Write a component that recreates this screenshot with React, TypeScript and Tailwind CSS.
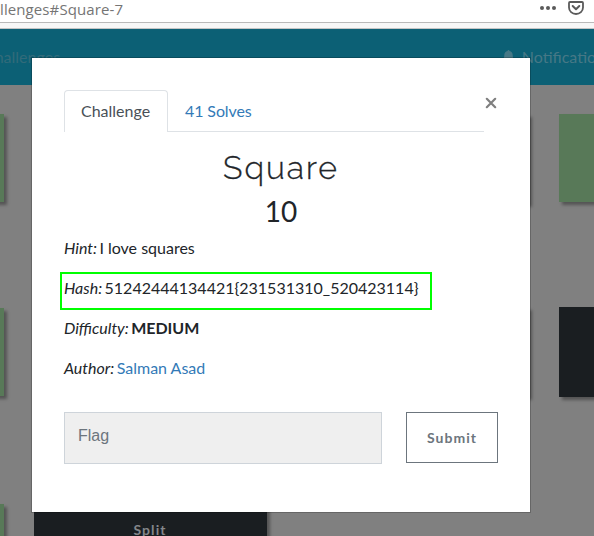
import React from "react";

const cards = [
  { solved: true }, { solved: true }, { solved: false }, { solved: true },
  { solved: true }, { solved: false }, { solved: false }, { solved: false },
  { solved: true }, { solved: false, name: "Split" },
];

function BrowserBar() {
  return (
    <div className="h-[29px] bg-white">
      <div className="flex h-[23px] items-start border-b border-[#b9b9b9]">
        <span className="whitespace-nowrap pt-px font-['Open_Sans',sans-serif] text-[15px] leading-4 tracking-[0.100px] text-[#757575]">
          llenges#Square-7
        </span>
        <svg className="mt-[5px] ml-auto" width="16" height="6" viewBox="0 0 16 6" fill="#5a5a5a">
          <circle cx="2" cy="3" r="2" />
          <circle cx="8" cy="3" r="2" />
          <circle cx="14" cy="3" r="2" />
        </svg>
        <svg className="mt-px mr-[10px] ml-3" width="16" height="14" viewBox="0 0 16 14" fill="none" stroke="#5a5a5a">
          <path d="M2 1h12a1 1 0 0 1 1 1v4.500a7 6.500 0 0 1-14 0V2a1 1 0 0 1 1-1z" strokeWidth="1.800" />
          <path d="M4.700 5L8 8.200 11.300 5" strokeWidth="2" strokeLinecap="round" strokeLinejoin="round" />
        </svg>
      </div>
      <div className="h-[6px] border-b border-[#c4c4c4] bg-[#f7f7f7]" />
    </div>
  );
}

function Label({ children }: { children: React.ReactNode }) {
  return <em className="-mr-[1.700px]">{children}</em>;
}

function ChallengeModal() {
  return (
    <div className="absolute top-[57px] left-[31px] h-[456px] w-[500px] border border-black/20 bg-white bg-clip-padding px-8 pt-8 text-[#212529]">
      <div className="flex">
        <div className="flex h-[42px] w-[420px] border-b border-[#dee2e6] text-base leading-6">
          <div className="h-[42px] w-[104px] rounded-t border border-b-0 border-[#dee2e6] bg-white px-4 pt-2 text-[#495057]">
            Challenge
          </div>
          <div className="px-[17px] pt-[9px] tracking-[-0.100px] text-[#337ab7]">41 Solves</div>
        </div>
        <svg className="mt-[7px] ml-px" width="12" height="12" viewBox="0 0 12 12" stroke="#7f7f7f" strokeWidth="2.200" strokeLinecap="round">
          <path d="M1.800 1.800l8.400 8.400M10.200 1.800L1.800 10.200" />
        </svg>
      </div>
      <h2 className="mt-4 h-[45px] text-center font-['Raleway','Lato',sans-serif] text-[32px] leading-[40px] font-light tracking-[2px] [-webkit-text-stroke:0.300px_#212529]">
        Square
      </h2>
      <h3 className="h-[37px] text-center text-[28px] leading-[36px]">10</h3>
      <div className="flex flex-col gap-4 pt-[6px] text-base leading-6">
        <p><Label>Hint:</Label> I love squares</p>
        <p className="-mx-1 -my-1 h-8 w-fit">
          <span className="block h-[38px] w-[372px] border-2 border-[#00ff00] px-[2px] pt-[2px] whitespace-nowrap">
            <Label>Hash:</Label> 51242444134421{"{231531310_520423114}"}
          </span>
        </p>
        <p><Label>Difficulty:</Label> <strong>MEDIUM</strong></p>
        <p><Label>Author:</Label> <span className="text-[#337ab7]">Salman Asad</span></p>
      </div>
      <div className="mt-8 flex">
        <input
          placeholder="Flag"
          className="h-[52px] w-[318px] border border-[#ced4da] bg-[#efefef] px-[13px] pb-[5px] font-['Liberation_Sans',sans-serif] text-base placeholder:text-[#6c757d]"
        />
        <button className="ml-6 h-[51px] w-[92px] border border-[#6c757d] text-[14px] font-bold tracking-[1.050px] text-[#6c757d]">
          Submit
        </button>
      </div>
    </div>
  );
}

export default function App() {
  return (
    <div className="relative h-[536px] w-[594px] overflow-hidden bg-[#808080] font-['Lato',sans-serif]">
      <BrowserBar />
      <nav className="flex h-14 items-center justify-between bg-[#0c6075] text-base text-[#467886]">
        <span className="-ml-[16px] text-[#326b7a]">Challenges</span>
        <span className="-mr-[18px] flex items-center gap-[8px]">
          <svg className="-mt-[2px]" width="11" height="13" viewBox="0 0 12 14" fill="currentColor">
            <path d="M6 0a1 1 0 0 0-1 1C2.500 1.500 1.400 3.300 1.400 5.500 1.400 8 .8 9 0 10v1h12v-1c-.8-1-1.400-2-1.400-4.500C10.600 3.300 9.500 1.500 7 1a1 1 0 0 0-1-1zM4.300 12a1.700 1.700 0 0 0 3.400 0z" />
          </svg>
          Notifications
        </span>
      </nav>
      <main className="-ml-[229px] grid w-[1021px] auto-rows-[90px] grid-cols-[233px_233px_233px_233px] gap-x-[29.500px] gap-y-[105px] pt-[29px]">
        {cards.map((card, i) => (
          <div
            key={i}
            className={`flex justify-center pt-[17px] text-[14px] leading-[18px] font-bold tracking-[1.050px] text-[#84868a] shadow-[3px_3px_3px_rgba(0,0,0,0.35)] ${
              card.solved ? "h-[88px] bg-[#587958]" : "h-[90px] bg-[#1a1e21]"
            } ${i > 3 && i < 8 && !card.solved ? "-mt-[2px]" : i > 3 && i < 8 ? "-mt-px" : ""}`}
          >
            {card.name}
          </div>
        ))}
      </main>
      <ChallengeModal />
    </div>
  );
}
